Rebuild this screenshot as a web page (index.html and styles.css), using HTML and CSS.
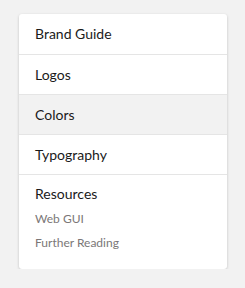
FILE: index.html
```html
<!DOCTYPE html>
<html lang="en">

<head>
    <meta charset="UTF-8">
    <meta name="viewport" content="width=device-width, initial-scale=1.0">
    <title>Guide</title>

    <link rel="stylesheet" href="styles.css">
</head>

<body>

    <nav class="menu">
        <a class="item" href="#">Brand Guide</a>
        <a class="item" href="#">Logos</a>
        <a class="item active" href="#">Colors</a>
        <a class="item" href="#">Typography</a>
        <div class="item group">
            <span class="group-title">Resources</span>
            <a class="sub" href="#">Web GUI</a>
            <a class="sub" href="#">Further Reading</a>
        </div>
    </nav>

</body>

</html>
```

FILE: styles.css
```css
body {
    margin: 0;
    padding: 14px 18px 0 19px;
    background: #f2f2f2;
    font-family: Lato, sans-serif;
}

.menu {
    width: 208px;
    background: #fff;
    border-radius: 3px;
    box-shadow: 0 1px 3px rgba(0, 0, 0, .2);
    display: flex;
    flex-direction: column;
}

.item {
    display: block;
    height: 40px;
    line-height: 40px;
    padding: 0 16px;
    font-size: 14px;
    color: #1a1a1a;
    text-decoration: none;
    border-top: 1px solid #e5e5e5;
    box-sizing: border-box;
}

.item:first-child {
    border-top: 0;
}

.active {
    background: #f2f2f2;
}

.group {
    height: 95px;
    line-height: 17px;
    padding-top: 10px;
    display: flex;
    flex-direction: column;
}

.group-title {
    margin-bottom: 5px;
}

.sub {
    font-size: 12px;
    color: #7b7777;
    text-decoration: none;
    line-height: 24px;
}
```
